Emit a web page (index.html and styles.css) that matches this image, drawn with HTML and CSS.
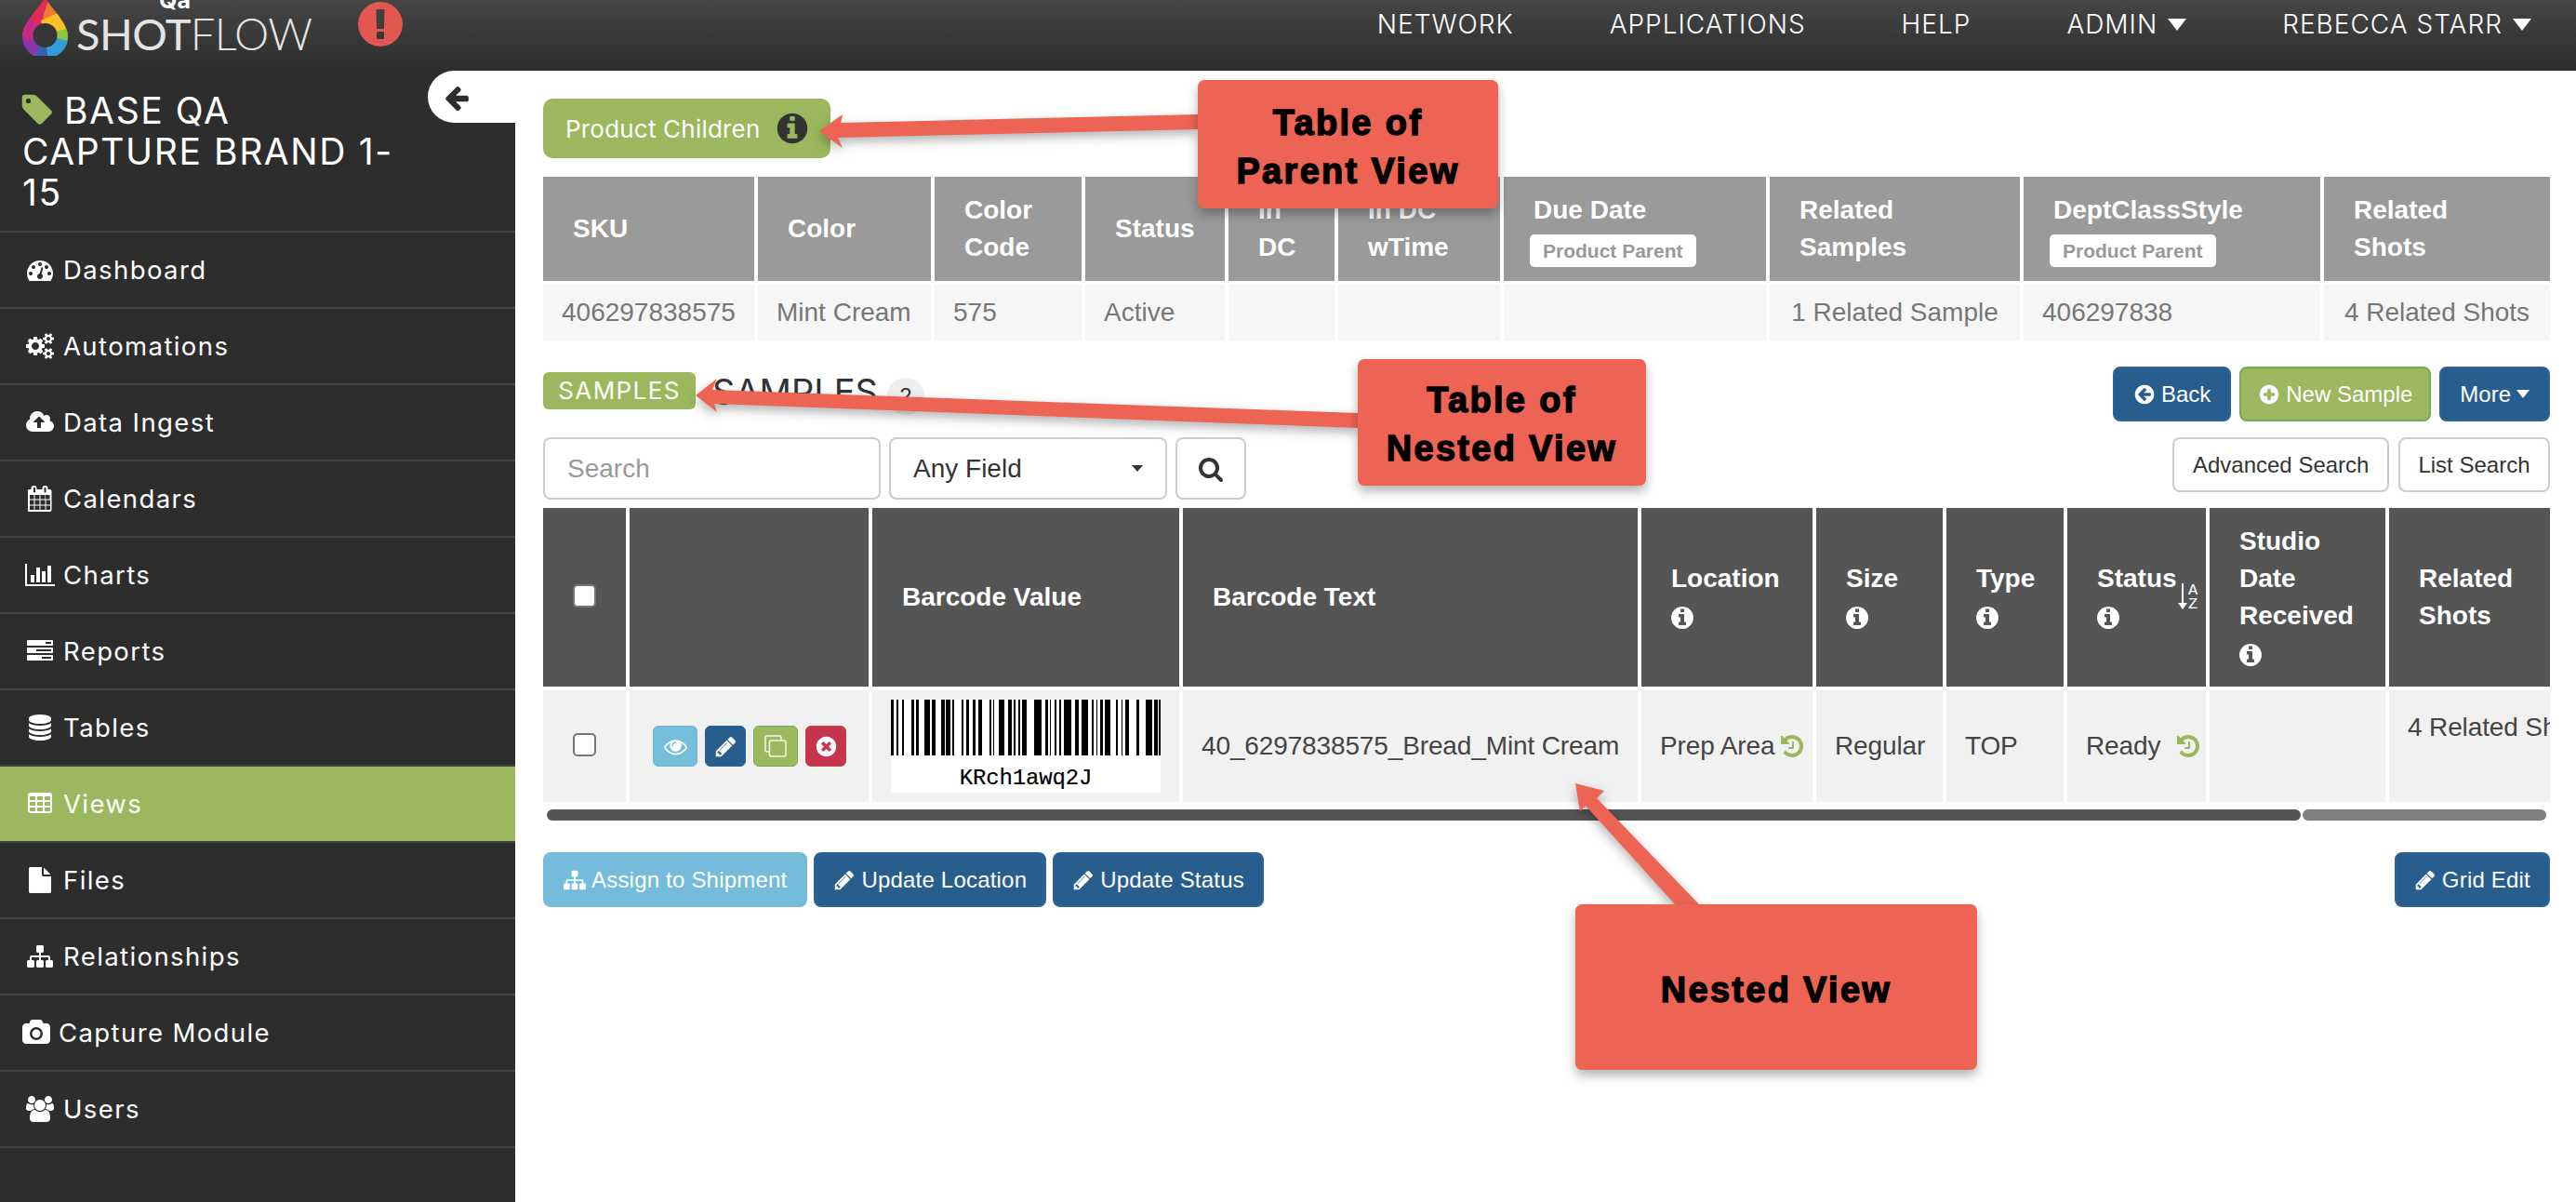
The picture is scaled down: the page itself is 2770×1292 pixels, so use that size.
FILE: index.html
```html
<!DOCTYPE html>
<html lang="en">
<head>
<meta charset="utf-8">
<title>ShotFlow</title>
<link rel="stylesheet" href="styles.css">
</head>
<body>
<svg class="sprite" xmlns="http://www.w3.org/2000/svg">
  <symbol id="i-arrow-left" viewBox="0 0 1792 1792"><path d="M1664 896v128q0 53-32.5 90.5t-84.5 37.5h-704l293 294q38 36 38 90t-38 90l-75 76q-37 37-90 37-52 0-91-37l-651-652q-37-37-37-90 0-52 37-91l651-650q38-38 91-38 52 0 90 38l75 74q38 38 38 91t-38 91l-293 293h704q52 0 84.5 37.5t32.5 90.5z"/></symbol>
  <symbol id="i-info" viewBox="0 0 1792 1792"><path d="M1152 1376v-160q0-14-9-23t-23-9h-96v-512q0-14-9-23t-23-9h-320q-14 0-23 9t-9 23v160q0 14 9 23t23 9h96v320h-96q-14 0-23 9t-9 23v160q0 14 9 23t23 9h448q14 0 23-9t9-23zm-128-896v-160q0-14-9-23t-23-9h-192q-14 0-23 9t-9 23v160q0 14 9 23t23 9h192q14 0 23-9t9-23zm640 416q0 209-103 385.500t-279.500 279.500-385.500 103-385.500-103-279.500-279.500-103-385.500 103-385.500 279.500-279.500 385.500-103 385.500 103 279.500 279.500 103 385.500z"/></symbol>
  <symbol id="i-search" viewBox="0 0 1792 1792"><path d="M1216 832q0-185-131.500-316.500t-316.500-131.500-316.500 131.500-131.500 316.500 131.500 316.500 316.500 131.500 316.500-131.500 131.500-316.500zm512 832q0 52-38 90t-90 38q-54 0-90-38l-343-342q-179 124-399 124-143 0-273.500-55.500t-225-150-150-225-55.500-273.500 55.500-273.500 150-225 225-150 273.500-55.500 273.500 55.500 225 150 150 225 55.500 273.500q0 220-124 399l343 343q37 37 37 90z"/></symbol>
  <symbol id="i-pencil" viewBox="0 0 1792 1792"><path d="M491 1536l91-91-235-235-91 91v107h128v128h107zm523-928q0-22-22-22-10 0-17 7l-542 542q-7 7-7 17 0 22 22 22 10 0 17-7l542-542q7-7 7-17zm-54-192l416 416-832 832h-416v-416zm683 96q0 53-37 90l-166 166-416-416 166-165q36-38 90-38 53 0 91 38l235 234q37 39 37 91z"/></symbol>
  <symbol id="i-tag" viewBox="0 0 1792 1792"><path d="M576 448q0-53-37.500-90.500t-90.500-37.500-90.500 37.500-37.500 90.500 37.500 90.500 90.500 37.500 90.500-37.500 37.500-90.500zm1067 576q0 53-37 90l-491 492q-39 37-91 37-53 0-90-37l-715-716q-38-37-64.500-101t-26.500-117v-416q0-52 38-90t90-38h416q53 0 117 26.500t102 64.500l715 714q37 39 37 91z"/></symbol>
  <symbol id="i-alert" viewBox="0 0 1792 1792"><path d="M896 128q209 0 385.500 103t279.500 279.500 103 385.500-103 385.500-279.500 279.500-385.500 103-385.500-103-279.500-279.500-103-385.500 103-385.500 279.500-279.500 385.500-103zm128 1247v-190q0-14-9-23.500t-22-9.500h-192q-13 0-23 10t-10 23v190q0 13 10 23t23 10h192q13 0 22-9.500t9-23.500zm-2-344l18-621q0-12-10-18-10-8-24-8h-220q-14 0-24 8-10 6-10 18l17 621q0 10 10 17.500t24 7.500h185q14 0 23.500-7.500t10.500-17.500z"/></symbol>
  <symbol id="i-times" viewBox="0 0 1792 1792"><path d="M1277 1122q0-26-19-45l-181-181 181-181q19-19 19-45 0-27-19-46l-90-90q-19-19-46-19-26 0-45 19l-181 181-181-181q-19-19-45-19-27 0-46 19l-90 90q-19 19-19 46 0 26 19 45l181 181-181 181q-19 19-19 45 0 27 19 46l90 90q19 19 46 19 26 0 45-19l181-181 181 181q19 19 45 19 27 0 46-19l90-90q19-19 19-46zm387-226q0 209-103 385.500t-279.500 279.500-385.500 103-385.500-103-279.500-279.500-103-385.500 103-385.500 279.500-279.500 385.500-103 385.500 103 279.500 279.500 103 385.500z"/></symbol>
  <symbol id="i-plus" viewBox="0 0 1792 1792"><path d="M1344 960v-128q0-26-19-45t-45-19h-256v-256q0-26-19-45t-45-19h-128q-26 0-45 19t-19 45v256h-256q-26 0-45 19t-19 45v128q0 26 19 45t45 19h256v256q0 26 19 45t45 19h128q26 0 45-19t19-45v-256h256q26 0 45-19t19-45zm320-64q0 209-103 385.500t-279.500 279.500-385.500 103-385.500-103-279.500-279.500-103-385.500 103-385.500 279.500-279.500 385.500-103 385.500 103 279.500 279.500 103 385.500z"/></symbol>
  <symbol id="i-back" viewBox="0 0 1792 1792"><path d="M1408 960v-128q0-26-18.500-45t-45.500-19h-502l189-189q19-19 19-45t-19-45l-91-91q-18-18-45-18t-45 18l-362 362-91 91q-18 18-18 45t18 45l91 91 362 362q18 18 45 18t45-18l91-91q18-18 18-45t-18-45l-189-189h502q27 0 45.500-19t18.500-45zm256-64q0 209-103 385.500t-279.500 279.500-385.500 103-385.500-103-279.500-279.500-103-385.500 103-385.500 279.500-279.500 385.500-103 385.500 103 279.500 279.500 103 385.500z"/></symbol>
  <symbol id="i-file" viewBox="0 0 1792 1792"><path d="M1152 512v-472q22 14 36 28l408 408q14 14 28 36h-472zm-128 32q0 40 28 68t68 28h544v1056q0 40-28 68t-68 28h-1344q-40 0-68-28t-28-68v-1600q0-40 28-68t68-28h800v544z"/></symbol>
  <symbol id="i-sitemap" viewBox="0 0 1792 1792"><path d="M1792 1248v320q0 40-28 68t-68 28h-320q-40 0-68-28t-28-68v-320q0-40 28-68t68-28h96v-192h-512v192h96q40 0 68 28t28 68v320q0 40-28 68t-68 28h-320q-40 0-68-28t-28-68v-320q0-40 28-68t68-28h96v-192h-512v192h96q40 0 68 28t28 68v320q0 40-28 68t-68 28h-320q-40 0-68-28t-28-68v-320q0-40 28-68t68-28h96v-192q0-52 38-90t90-38h512v-192h-96q-40 0-68-28t-28-68v-320q0-40 28-68t68-28h320q40 0 68 28t28 68v320q0 40-28 68t-68 28h-96v192h512q52 0 90 38t38 90v192h96q40 0 68 28t28 68z"/></symbol>
  <symbol id="i-camera" viewBox="0 0 1920 1792"><path d="M960 672q119 0 203.500 84.500t84.500 203.500-84.500 203.500-203.500 84.500-203.500-84.500-84.500-203.500 84.500-203.500 203.500-84.500zm704-416q106 0 181 75t75 181v896q0 106-75 181t-181 75h-1408q-106 0-181-75t-75-181v-896q0-106 75-181t181-75h224l51-136q19-49 69.500-84.500t103.500-35.500h512q53 0 103.500 35.500t69.500 84.500l51 136h224zm-704 1152q185 0 316.500-131.500t131.500-316.500-131.500-316.500-316.500-131.500-316.500 131.500-131.500 316.500 131.500 316.500 316.500 131.500z"/></symbol>
  <symbol id="i-users" viewBox="0 0 1920 1792"><path d="M593 896q-162 5-265 128h-134q-82 0-138-40.500t-56-118.500q0-353 124-353 6 0 43.500 21t97.500 42.500 119 21.500q67 0 133-23-5 37-5 66 0 139 81 256zm1071 637q0 120-73 189.500t-194 69.500h-874q-121 0-194-69.500t-73-189.500q0-53 3.500-103.500t14-109 26.500-108.500 43-97.500 62-81 85.500-53.500 111.500-20q10 0 43 21.500t73 48 107 48 135 21.500 135-21.500 107-48 73-48 43-21.500q61 0 111.500 20t85.500 53.500 62 81 43 97.500 26.500 108.500 14 109 3.500 103.500zm-1024-1277q0 106-75 181t-181 75-181-75-75-181 75-181 181-75 181 75 75 181zm704 384q0 159-112.500 271.500t-271.500 112.500-271.500-112.500-112.500-271.500 112.500-271.500 271.500-112.500 271.500 112.500 112.500 271.500zm576 225q0 78-56 118.500t-138 40.500h-134q-103-123-265-128 81-117 81-256 0-29-5-66 66 23 133 23 59 0 119-21.500t97.500-42.500 43.500-21q124 0 124 353zm-128-609q0 106-75 181t-181 75-181-75-75-181 75-181 181-75 181 75 75 181z"/></symbol>
  <symbol id="i-database" viewBox="0 0 1792 1792"><path d="M896 768q237 0 443-43t325-127v170q0 69-103 128t-280 93.500-385 34.500-385-34.500-280-93.500-103-128v-170q119 84 325 127t443 43zm0 768q237 0 443-43t325-127v170q0 69-103 128t-280 93.500-385 34.500-385-34.500-280-93.500-103-128v-170q119 84 325 127t443 43zm0-384q237 0 443-43t325-127v170q0 69-103 128t-280 93.500-385 34.500-385-34.500-280-93.500-103-128v-170q119 84 325 127t443 43zm0-1152q208 0 385 34.500t280 93.500 103 128v128q0 69-103 128t-280 93.500-385 34.500-385-34.500-280-93.500-103-128v-128q0-69 103-128t280-93.500 385-34.500z"/></symbol>
  <symbol id="i-table" viewBox="0 0 1792 1792"><path d="M576 1376v-192q0-14-9-23t-23-9h-320q-14 0-23 9t-9 23v192q0 14 9 23t23 9h320q14 0 23-9t9-23zm0-384v-192q0-14-9-23t-23-9h-320q-14 0-23 9t-9 23v192q0 14 9 23t23 9h320q14 0 23-9t9-23zm512 384v-192q0-14-9-23t-23-9h-320q-14 0-23 9t-9 23v192q0 14 9 23t23 9h320q14 0 23-9t9-23zm-512-768v-192q0-14-9-23t-23-9h-320q-14 0-23 9t-9 23v192q0 14 9 23t23 9h320q14 0 23-9t9-23zm512 384v-192q0-14-9-23t-23-9h-320q-14 0-23 9t-9 23v192q0 14 9 23t23 9h320q14 0 23-9t9-23zm512 384v-192q0-14-9-23t-23-9h-320q-14 0-23 9t-9 23v192q0 14 9 23t23 9h320q14 0 23-9t9-23zm-512-768v-192q0-14-9-23t-23-9h-320q-14 0-23 9t-9 23v192q0 14 9 23t23 9h320q14 0 23-9t9-23zm512 384v-192q0-14-9-23t-23-9h-320q-14 0-23 9t-9 23v192q0 14 9 23t23 9h320q14 0 23-9t9-23zm0-384v-192q0-14-9-23t-23-9h-320q-14 0-23 9t-9 23v192q0 14 9 23t23 9h320q14 0 23-9t9-23zm128-320v1088q0 66-47 113t-113 47h-1344q-66 0-113-47t-47-113v-1088q0-66 47-113t113-47h1344q66 0 113 47t47 113z"/></symbol>
  <symbol id="i-chart" viewBox="0 0 2048 1792"><path d="M640 896v512h-256v-512h256zm384-512v1024h-256v-1024h256zm1024 1152v128h-2048v-1536h128v1408h1920zm-640-896v768h-256v-768h256zm384-384v1152h-256v-1152h256z"/></symbol>
  <symbol id="i-cloud" viewBox="0 0 1920 1792"><path d="M1280 864q0-14-9-23l-352-352q-9-9-23-9t-23 9l-351 351q-10 12-10 24 0 14 9 23t23 9h224v352q0 13 9.500 22.500t22.500 9.500h192q13 0 22.500-9.500t9.500-22.500v-352h224q13 0 22.500-9.500t9.500-22.500zm640 288q0 159-112.500 271.500t-271.500 112.500h-1088q-185 0-316.500-131.500t-131.500-316.500q0-130 70-240t188-165q-2-30-2-43 0-212 150-362t362-150q156 0 285.500 87t188.500 231q71-62 166-62 106 0 181 75t75 181q0 76-41 138 130 31 213.500 135.500t83.500 238.500z"/></symbol>
  <symbol id="i-calendar" viewBox="0 0 1664 1792"><path d="M128 1664h288v-288h-288v288zm352 0h320v-288h-320v288zm-352-352h288v-320h-288v320zm352 0h320v-320h-320v320zm-352-384h288v-288h-288v288zm736 736h320v-288h-320v288zm-384-736h320v-288h-320v288zm768 736h288v-288h-288v288zm-384-352h320v-320h-320v320zm-352-864v-288q0-13-9.500-22.500t-22.500-9.500h-64q-13 0-22.500 9.500t-9.500 22.500v288q0 13 9.500 22.500t22.500 9.500h64q13 0 22.500-9.500t9.500-22.500zm736 864h288v-320h-288v320zm-384-384h320v-288h-320v288zm352 0h288v-288h-288v288zm32-480v-288q0-13-9.500-22.500t-22.500-9.500h-64q-13 0-22.500 9.500t-9.500 22.500v288q0 13 9.500 22.500t22.500 9.500h64q13 0 22.500-9.500t9.500-22.500zm384-64v1280q0 52-38 90t-90 38h-1408q-52 0-90-38t-38-90v-1280q0-52 38-90t90-38h128v-96q0-66 47-113t113-47h64q66 0 113 47t47 113v96h384v-96q0-66 47-113t113-47h64q66 0 113 47t47 113v96h128q52 0 90 38t38 90z"/></symbol>
  <symbol id="i-tasks" viewBox="0 0 1792 1792"><path d="M1024 1408h640v-128h-640v128zm-384-512h1024v-128h-1024v128zm640-512h384v-128h-384v128zm512 832v256q0 26-19 45t-45 19h-1664q-26 0-45-19t-19-45v-256q0-26 19-45t45-19h1664q26 0 45 19t19 45zm0-512v256q0 26-19 45t-45 19h-1664q-26 0-45-19t-19-45v-256q0-26 19-45t45-19h1664q26 0 45 19t19 45zm0-512v256q0 26-19 45t-45 19h-1664q-26 0-45-19t-19-45v-256q0-26 19-45t45-19h1664q26 0 45 19t19 45z"/></symbol>
  <symbol id="i-dashboard" viewBox="0 0 1792 1792"><path d="M384 1152q0-53-37.500-90.500t-90.500-37.500-90.500 37.500-37.500 90.500 37.500 90.500 90.500 37.500 90.500-37.500 37.500-90.500zm192-448q0-53-37.500-90.500t-90.500-37.500-90.500 37.500-37.500 90.500 37.500 90.500 90.500 37.500 90.500-37.500 37.500-90.500zm428 481l101-382q6-26-7.500-48.500t-38.500-29.500-48 6.500-30 39.500l-101 382q-60 5-107 43.500t-63 98.500q-20 77 20 146t117 89 146-20 89-117q16-60-6-117t-72-91zm660-33q0-53-37.500-90.500t-90.500-37.500-90.500 37.500-37.500 90.500 37.500 90.500 90.500 37.500 90.500-37.500 37.500-90.500zm-640-640q0-53-37.500-90.500t-90.500-37.500-90.500 37.500-37.500 90.500 37.500 90.500 90.500 37.500 90.500-37.500 37.500-90.500zm448 192q0-53-37.500-90.500t-90.500-37.500-90.500 37.500-37.500 90.500 37.500 90.500 90.500 37.500 90.500-37.500 37.500-90.500zm320 448q0 261-141 483-19 29-54 29h-1402q-35 0-54-29-141-221-141-483 0-182 71-348t191-286 286-191 348-71 348 71 286 191 191 286 71 348z"/></symbol>
  <symbol id="i-cogs" viewBox="0 0 1920 1792"><path d="M896 896q0-106-75-181t-181-75-181 75-75 181 75 181 181 75 181-75 75-181zm768 512q0-52-38-90t-90-38-90 38-38 90q0 53 37.500 90.500t90.500 37.500 90.500-37.500 37.500-90.500zm0-1024q0-52-38-90t-90-38-90 38-38 90q0 53 37.500 90.500t90.500 37.500 90.500-37.500 37.500-90.500zm-384 421v185q0 10-7 19.500t-16 10.500l-155 24q-11 35-32 76 34 48 90 115 7 11 7 20 0 12-7 19-23 30-82.500 89.500t-78.500 59.500q-11 0-21-7l-115-90q-37 19-77 31-11 108-23 155-7 24-30 24h-186q-11 0-20-7.500t-10-17.500l-23-153q-34-10-75-31l-118 89q-7 7-20 7-11 0-21-8-144-133-144-160 0-9 7-19 10-14 41-53t47-61q-23-44-35-82l-152-24q-10-1-17-9.500t-7-19.500v-185q0-10 7-19.500t16-10.500l155-24q11-35 32-76-34-48-90-115-7-11-7-20 0-12 7-20 22-30 82-89t79-59q11 0 21 7l115 90q34-18 77-32 11-108 23-154 7-24 30-24h186q11 0 20 7.500t10 17.500l23 153q34 10 75 31l118-89q8-7 20-7 11 0 21 8 144 133 144 160 0 8-7 19-12 16-42 54t-45 60q23 48 34 82l152 23q10 2 17 10.500t7 19.500zm640 533v140q0 16-149 31-12 27-30 52 51 113 51 138 0 4-4 7-122 71-124 71-8 0-46-47t-52-68q-20 2-30 2t-30-2q-14 21-52 68t-46 47q-2 0-124-71-4-3-4-7 0-25 51-138-18-25-30-52-149-15-149-31v-140q0-16 149-31 13-29 30-52-51-113-51-138 0-4 4-7 4-2 35-20t59-34 30-16q8 0 46 46.500t52 67.500q20-2 30-2t30 2q51-71 92-112l6-2q4 0 124 70 4 3 4 7 0 25-51 138 17 23 30 52 149 15 149 31zm0-1024v140q0 16-149 31-12 27-30 52 51 113 51 138 0 4-4 7-122 71-124 71-8 0-46-47t-52-68q-20 2-30 2t-30-2q-14 21-52 68t-46 47q-2 0-124-71-4-3-4-7 0-25 51-138-18-25-30-52-149-15-149-31v-140q0-16 149-31 13-29 30-52-51-113-51-138 0-4 4-7 4-2 35-20t59-34 30-16q8 0 46 46.500t52 67.500q20-2 30-2t30 2q51-71 92-112l6-2q4 0 124 70 4 3 4 7 0 25-51 138 17 23 30 52 149 15 149 31z"/></symbol>
  <symbol id="i-history" viewBox="0 0 1792 1792"><path d="M1664 896q0 156-61 298t-164 245-245 164-298 61q-172 0-327-72.500t-264-204.500q-7-10-6.500-22.500t8.500-20.500l137-138q10-9 25-9 16 2 23 12 73 95 179 147t225 52q104 0 198.500-40.500t163.500-109.500 109.500-163.500 40.500-198.500-40.500-198.500-109.500-163.500-163.500-109.500-198.500-40.500q-98 0-188 35.500t-160 101.500l137 138q31 30 14 69-17 40-59 40h-448q-26 0-45-19t-19-45v-448q0-42 40-59 39-17 69 14l130 129q107-101 244.500-156.500t284.500-55.500q156 0 298 61t245 164 164 245 61 298zm-640-288v448q0 14-9 23t-23 9h-320q-14 0-23-9t-9-23v-64q0-14 9-23t23-9h224v-352q0-14 9-23t23-9h64q14 0 23 9t9 23z"/></symbol>
  <symbol id="i-eye" viewBox="0 0 1792 1792"><path d="M1664 960q-152-236-381-353 61 104 61 225 0 185-131.500 316.500t-316.500 131.500-316.500-131.500-131.500-316.500q0-121 61-225-229 117-381 353 133 205 333.500 326.500t434.500 121.500 434.500-121.500 333.500-326.500zm-720-384q0-20-14-34t-34-14q-125 0-214.500 89.500t-89.500 214.500q0 20 14 34t34 14 34-14 14-34q0-86 61-147t147-61q20 0 34-14t14-34zm848 384q0 34-20 69-140 230-376.500 368.500t-499.500 138.500-499.500-139-376.500-368q-20-35-20-69t20-69q140-229 376.500-368t499.500-139 499.500 139 376.500 368q20 35 20 69z"/></symbol>
</svg>

<header class="topbar">
  <div class="brand">
    <svg class="logo" viewBox="0 0 49 60" xmlns="http://www.w3.org/2000/svg">
      <defs><clipPath id="drop"><path d="M24.500 -3C30 8 49 24 49 39C49 53 38 63 24.500 63C11 63 0 53 0 39C0 24 19 8 24.500 -3Z"/></clipPath></defs>
      <g clip-path="url(#drop)">
        <path fill="#e12a5c" d="M24.500 38L-6 10L20 -6L30 -6L22 18Z"/>
        <path fill="#ee7a31" d="M24.500 38L22 18L30 -6L44 16Z"/>
        <path fill="#f6c325" d="M24.500 38L20 22L38 14L55 30L55 36Z"/>
        <path fill="#8fc640" d="M24.500 38L55 28L55 58L44 60Z"/>
        <path fill="#2f9fd8" d="M24.500 38L50 44L44 70L16 70Z"/>
        <path fill="#3b62b2" d="M24.500 38L28 66L4 66L8 48Z"/>
        <path fill="#8a35a9" d="M24.500 38L12 62L-6 60L-6 24L10 30Z"/>
        <path fill="#c42a86" d="M24.500 38L4 44L-6 30L4 16L14 26Z"/>
        <circle cx="24.500" cy="38" r="13" fill="#363636"/>
      </g>
    </svg>
    <span class="wordmark"><span class="wordmark-strong">SHOT</span>FLOW</span>
    <span class="env">Qa</span>
    <svg class="alert"><use href="#i-alert"/></svg>
  </div>
  <nav class="topnav">
    <a>NETWORK</a>
    <a>APPLICATIONS</a>
    <a>HELP</a>
    <a>ADMIN<i class="caret"></i></a>
    <a>REBECCA STARR<i class="caret"></i></a>
  </nav>
</header>

<div class="shell">
  <aside class="sidebar">
    <div class="collapse"><svg class="collapse-icon"><use href="#i-arrow-left"/></svg></div>
    <h1 class="title"><svg class="title-tag"><use href="#i-tag"/></svg>BASE QA<br>CAPTURE BRAND 1-<br>15</h1>
    <ul class="menu">
      <li class="menu-item"><span class="menu-icon"><svg class="w28"><use href="#i-dashboard"/></svg></span>Dashboard</li>
      <li class="menu-item"><span class="menu-icon"><svg class="w30"><use href="#i-cogs"/></svg></span>Automations</li>
      <li class="menu-item"><span class="menu-icon"><svg class="w30"><use href="#i-cloud"/></svg></span>Data Ingest</li>
      <li class="menu-item"><span class="menu-icon"><svg class="w26"><use href="#i-calendar"/></svg></span>Calendars</li>
      <li class="menu-item"><span class="menu-icon"><svg class="w32"><use href="#i-chart"/></svg></span>Charts</li>
      <li class="menu-item"><span class="menu-icon"><svg class="w28"><use href="#i-tasks"/></svg></span>Reports</li>
      <li class="menu-item"><span class="menu-icon"><svg class="w28"><use href="#i-database"/></svg></span>Tables</li>
      <li class="menu-item menu-item-active"><span class="menu-icon"><svg class="w28"><use href="#i-table"/></svg></span>Views</li>
      <li class="menu-item"><span class="menu-icon"><svg class="w28"><use href="#i-file"/></svg></span>Files</li>
      <li class="menu-item"><span class="menu-icon"><svg class="w28"><use href="#i-sitemap"/></svg></span>Relationships</li>
      <li class="menu-item"><span class="menu-icon menu-icon-camera"><svg class="w30"><use href="#i-camera"/></svg></span>Capture Module</li>
      <li class="menu-item"><span class="menu-icon"><svg class="w30"><use href="#i-users"/></svg></span>Users</li>
    </ul>
  </aside>

  <main class="content">
    <div class="pill-btn">Product Children<svg class="pill-info"><use href="#i-info"/></svg></div>

    <div class="grid parent-grid">
      <div class="th th-light">SKU</div>
      <div class="th th-light">Color</div>
      <div class="th th-light">Color<br>Code</div>
      <div class="th th-light">Status</div>
      <div class="th th-light">In<br>DC</div>
      <div class="th th-light">In DC<br>wTime</div>
      <div class="th th-light"><div>Due Date<br><span class="label">Product Parent</span></div></div>
      <div class="th th-light">Related<br>Samples</div>
      <div class="th th-light"><div>DeptClassStyle<br><span class="label">Product Parent</span></div></div>
      <div class="th th-light">Related<br>Shots</div>
      <div class="td td-light">406297838575</div>
      <div class="td td-light">Mint Cream</div>
      <div class="td td-light">575</div>
      <div class="td td-light">Active</div>
      <div class="td td-light"></div>
      <div class="td td-light"></div>
      <div class="td td-light"></div>
      <div class="td td-light td-centered">1 Related Sample</div>
      <div class="td td-light">406297838</div>
      <div class="td td-light td-centered">4 Related Shots</div>
    </div>

    <div class="section-bar">
      <div class="section-title">
        <span class="tag-green">SAMPLES</span>
        <h2 class="heading">SAMPLES</h2>
        <span class="count">2</span>
      </div>
      <div class="btn-row">
        <a class="btn btn-blue"><svg class="btn-icon"><use href="#i-back"/></svg>Back</a>
        <a class="btn btn-green"><svg class="btn-icon"><use href="#i-plus"/></svg>New Sample</a>
        <a class="btn btn-blue">More<i class="caret caret-small"></i></a>
      </div>
    </div>

    <div class="search-bar">
      <div class="search-left">
        <input class="field field-search" placeholder="Search" aria-label="Search">
        <div class="field field-select">Any Field<i class="caret caret-dark"></i></div>
        <div class="field field-go"><svg class="go-icon"><use href="#i-search"/></svg></div>
      </div>
      <div class="search-right">
        <a class="btn btn-plain">Advanced Search</a>
        <a class="btn btn-plain">List Search</a>
      </div>
    </div>

    <div class="grid child-grid">
      <div class="th th-dark th-center"><input class="check" type="checkbox" aria-label="Select all"></div>
      <div class="th th-dark"></div>
      <div class="th th-dark">Barcode Value</div>
      <div class="th th-dark">Barcode Text</div>
      <div class="th th-dark"><div>Location<br><svg class="th-info"><use href="#i-info"/></svg></div></div>
      <div class="th th-dark"><div>Size<br><svg class="th-info"><use href="#i-info"/></svg></div></div>
      <div class="th th-dark"><div>Type<br><svg class="th-info"><use href="#i-info"/></svg></div></div>
      <div class="th th-dark th-sorted"><div>Status<br><svg class="th-info"><use href="#i-info"/></svg></div>
        <span class="sort"><svg class="sort-arrow" viewBox="0 0 10 28"><path d="M4 0h2v21h4l-5 7-5-7h4z"/></svg><span class="sort-letters">A<br>Z</span></span>
      </div>
      <div class="th th-dark"><div>Studio<br>Date<br>Received<br><svg class="th-info"><use href="#i-info"/></svg></div></div>
      <div class="th th-dark">Related<br>Shots</div>

      <div class="td td-grey td-check"><input class="check" type="checkbox" aria-label="Select row"></div>
      <div class="td td-grey td-actions">
        <a class="act act-info"><svg class="act-icon"><use href="#i-eye"/></svg></a>
        <a class="act act-blue"><svg class="act-icon"><use href="#i-pencil"/></svg></a>
        <a class="act act-green"><svg class="act-copy" viewBox="0 0 24 24"><rect x="1" y="1" width="17" height="17" rx="2"/><rect class="act-copy-front" x="5.500" y="6" width="17.500" height="17" rx="2"/></svg></a>
        <a class="act act-red"><svg class="act-icon"><use href="#i-times"/></svg></a>
      </div>
      <div class="td td-grey td-barcode">
        <div class="barcode">
          <svg class="bars" viewBox="753 0 758 60" preserveAspectRatio="none"><path d="M753 0h9v60h-9zM768 0h5v60h-5zM784 0h5v60h-5zM810 0h8v60h-8zM824 0h8v60h-8zM847 0h15v60h-15zM868 0h10v60h-10zM895 0h9v60h-9zM908 0h12v60h-12zM925 0h5v60h-5zM952 0h6v60h-6zM965 0h7v60h-7zM983 0h7v60h-7zM998 0h12v60h-12zM1030 0h4v60h-4zM1040 0h4v60h-4zM1056 0h16v60h-16zM1082 0h10v60h-10zM1097 0h6v60h-6zM1110 0h7v60h-7zM1122 0h12v60h-12zM1155 0h21v60h-21zM1188 0h6v60h-6zM1200 0h3v60h-3zM1214 0h4v60h-4zM1226 0h6v60h-6zM1240 0h20v60h-20zM1270 0h10v60h-10zM1288 0h18v60h-18zM1318 0h4v60h-4zM1330 0h4v60h-4zM1340 0h10v60h-10zM1355 0h15v60h-15zM1386 0h6v60h-6zM1400 0h4v60h-4zM1412 0h10v60h-10zM1443 0h9v60h-9zM1470 0h17v60h-17zM1494 0h9v60h-9zM1507 0h4v60h-4z"/></svg>
          <div class="barcode-text">KRch1awq2J</div>
        </div>
      </div>
      <div class="td td-grey">40_6297838575_Bread_Mint Cream</div>
      <div class="td td-grey td-tight">Prep Area<svg class="hist"><use href="#i-history"/></svg></div>
      <div class="td td-grey">Regular</div>
      <div class="td td-grey">TOP</div>
      <div class="td td-grey td-ready">Ready<svg class="hist"><use href="#i-history"/></svg></div>
      <div class="td td-grey"></div>
      <div class="td td-grey td-clip">4 Related Shots</div>
    </div>

    <div class="scrollbar"><div class="scroll-thumb"></div><div class="scroll-rest"></div></div>

    <div class="bottom-bar">
      <div class="bottom-left">
        <a class="btn btn-info"><svg class="btn-icon"><use href="#i-sitemap"/></svg>Assign to Shipment</a>
        <a class="btn btn-blue"><svg class="btn-icon"><use href="#i-pencil"/></svg>Update Location</a>
        <a class="btn btn-blue"><svg class="btn-icon"><use href="#i-pencil"/></svg>Update Status</a>
      </div>
      <a class="btn btn-blue"><svg class="btn-icon"><use href="#i-pencil"/></svg>Grid Edit</a>
    </div>
  </main>
</div>

<svg class="arrows" viewBox="0 0 2770 1292" xmlns="http://www.w3.org/2000/svg">
  <polygon points="1288,123 904,132 906,123 881,141 906,159 901,148 1288,139"/>
  <polygon points="1460,444 766,419 771,407 748,425 771,443 768,434 1460,460"/>
  <polygon points="1801,972 1705,866 1699,872 1694,842 1725,850 1717,858 1827,972"/>
</svg>
<div class="callout callout-parent">Table of<br>Parent View</div>
<div class="callout callout-nested">Table of<br>Nested View</div>
<div class="callout callout-view">Nested View</div>
</body>
</html>
```

FILE: styles.css
```css
* { box-sizing: border-box; }
html, body { margin: 0; padding: 0; }
body {
  width: 2770px;
  height: 1292px;
  overflow: hidden;
  position: relative;
  background: #fff;
  font-family: "Liberation Sans", Arial, sans-serif;
  color: #333;
}
svg { fill: currentColor; display: block; }
.sprite { position: absolute; width: 0; height: 0; }

/* top bar */
.topbar {
  height: 76px;
  display: flex;
  justify-content: space-between;
  align-items: flex-start;
  background: linear-gradient(#454545, #2d2d2d);
  overflow: hidden;
  color: #fff;
}
.brand { position: relative; display: flex; align-items: flex-start; padding-left: 24px; }
.logo { width: 49px; height: 60px; flex: none; }
.wordmark {
  margin: 10px 0 0 9px;
  font-family: Lato, "Liberation Sans", sans-serif;
  font-weight: 300;
  font-size: 47px;
  line-height: 52px;
  color: #e4e4e4;
  letter-spacing: -0.6px;
}
.wordmark-strong { font-weight: 400; }
.env {
  position: absolute;
  left: 171px;
  top: -15px;
  font-family: Inter, sans-serif;
  font-weight: 700;
  font-size: 25px;
  line-height: 30px;
}
.alert { width: 56px; height: 56px; margin: -2px 0 0 45px; color: #e2574f; }
.topnav {
  display: flex;
  gap: 103px;
  padding-right: 48px;
  font-family: Inter, sans-serif;
  font-size: 28px;
  font-weight: 300;
  letter-spacing: 1px;
  line-height: 52px;
}
.topnav a { display: flex; align-items: center; }
.caret {
  display: inline-block;
  width: 0;
  height: 0;
  margin-left: 11px;
  border-left: 10px solid transparent;
  border-right: 10px solid transparent;
  border-top: 13px solid #fff;
}
.caret-small { margin-left: 6px; border-left-width: 7px; border-right-width: 7px; border-top-width: 9px; }
.caret-dark { margin-left: auto; border-left-width: 6px; border-right-width: 6px; border-top-width: 7px; border-top-color: #333; }

/* sidebar */
.shell { display: flex; height: 1216px; }
.sidebar {
  position: relative;
  width: 554px;
  flex: none;
  background: #2d2d2d;
  color: #fff;
  font-family: Inter, sans-serif;
}
.collapse {
  position: absolute;
  left: 460px;
  top: 0;
  right: 0;
  height: 56px;
  padding: 14px 0 0 16px;
  background: #fff;
  border-radius: 28px 0 0 28px;
  color: #2d2d2d;
}
.collapse-icon { width: 30px; height: 30px; }
.title {
  margin: 0;
  height: 172px;
  padding: 21px 24px 0;
  font-size: 39px;
  line-height: 44px;
  font-weight: 400;
  letter-spacing: 1.6px;
}
.title-tag { display: inline-block; width: 38px; height: 38px; margin: 0 10px -4px -3px; color: #9bb85e; }
.menu { margin: 0; padding: 0; list-style: none; border-top: 2px solid #444; }
.menu-item {
  height: 82px;
  display: flex;
  align-items: center;
  padding-left: 26px;
  border-bottom: 2px solid #444;
  font-size: 27.5px;
  letter-spacing: 1.4px;
}
.menu-item-active { background: #9bb85e; }
.menu-icon { width: 34px; margin-right: 8px; display: flex; justify-content: center; flex: none; }
.menu-icon-camera { margin: 0 9px 0 -2px; width: 30px; }
.w26 { width: 26px; height: 28px; }
.w28 { width: 28px; height: 28px; }
.w30 { width: 30px; height: 28px; }
.w32 { width: 32px; height: 28px; }

/* content */
.content { flex: 1; min-width: 0; padding: 30px 28px 0 30px; }
.pill-btn {
  width: 309px;
  height: 64px;
  display: flex;
  align-items: center;
  padding-left: 24px;
  background: #9bb85e;
  border-radius: 10px;
  color: #fff;
  font-family: Inter, sans-serif;
  font-size: 26px;
  letter-spacing: 0.2px;
}
.pill-info { width: 38px; height: 38px; margin-left: 16px; color: #333; flex: none; }

.grid { display: grid; column-gap: 4px; row-gap: 4px; }
.parent-grid {
  margin-top: 20px;
  grid-template-columns: 227px 186px 158px 150px 114px 174px 282px 269px 319px 243px;
  grid-template-rows: 112px 60px;
}
.child-grid {
  margin-top: 9px;
  grid-template-columns: 89px 257px 330px 489px 184px 136px 126px 149px 189px 173px;
  grid-template-rows: 192px 120px;
}
.th {
  display: flex;
  align-items: center;
  padding-left: 32px;
  color: #fff;
  font-size: 28px;
  font-weight: 700;
  line-height: 40px;
}
.th-light { background: #9a9a9a; }
.th-dark { background: #555; }
.th-center { padding: 0 0 3px 32px; align-items: center; }
.th-sorted { position: relative; padding-left: 32px; }
.label {
  display: inline-block;
  height: 35px;
  padding: 0 14px;
  margin: 6px 0 0 -4px;
  background: #fff;
  border-radius: 5px;
  color: #999;
  font-size: 21px;
  line-height: 35px;
  vertical-align: top;
}
.th-info { display: inline-block; width: 28px; height: 28px; margin-left: -2px; vertical-align: -7px; }
.sort { position: absolute; left: 119px; top: 81px; display: flex; gap: 1px; }
.sort-arrow { width: 10px; height: 28px; }
.sort-letters { font-family: "Liberation Mono", monospace; font-size: 17px; line-height: 15px; font-weight: 400; }

.td { display: flex; align-items: center; padding-left: 20px; font-size: 28px; white-space: nowrap; }
.td-light { background: #f6f6f6; color: #777; }
.td-grey { background: #f1f1f1; color: #444; letter-spacing: -0.13px; }
.td-centered { justify-content: center; padding-left: 0; }
.td-check { padding: 0 0 4px 32px; }
.td-actions { padding: 0 0 0 25px; gap: 8px; }
.td-tight { padding-right: 0; }
.td-ready { padding-left: 20px; }
.td-clip { align-items: flex-start; padding-top: 20px; overflow: hidden; line-height: 40px; }
.td-barcode { padding-left: 20px; }
.check {
  appearance: none;
  width: 25px;
  height: 25px;
  margin: 0;
  background: #fff;
  border: 2px solid #777;
  border-radius: 5px;
}
.act {
  height: 44px;
  display: flex;
  align-items: center;
  justify-content: center;
  border-radius: 6px;
  color: #fff;
  border: 1px solid transparent;
}
.act-info { width: 48px; background: #75bedb; border-color: #6bb6d4; }
.act-blue { width: 44px; background: #285e8e; border-color: #2d6395; }
.act-green { width: 48px; background: #9bb85e; border-color: #6eae5a; }
.act-red { width: 44px; background: #c7344f; border-color: #c34a3e; }
.act-icon { width: 25px; height: 25px; }
.act-copy { width: 24px; height: 24px; fill: none; stroke: #f2f6e6; stroke-width: 1.5; }
.act-copy-front { fill: #9bb85e; }
.barcode { width: 290px; height: 100px; background: #fff; color: #000; }
.bars { width: 290px; height: 60px; shape-rendering: crispEdges; }
.barcode-text {
  text-align: center;
  font-family: "Liberation Mono", "Courier New", monospace;
  font-size: 24px;
  line-height: 50px;
  -webkit-text-stroke: 0.2px #000;
}
.hist { width: 28px; height: 28px; margin-left: 5px; color: #9bb85e; flex: none; }
.td-ready .hist { margin-left: 16px; }

.scrollbar { display: flex; gap: 2px; height: 12px; margin: 8px 4px 0; }
.scroll-thumb { width: 1886px; background: #555; border-radius: 6px; }
.scroll-rest { flex: 1; background: #808080; border-radius: 6px; }

.section-bar { display: flex; justify-content: space-between; align-items: flex-start; margin-top: 28px; height: 59px; }
.section-title { display: flex; align-items: flex-start; padding-top: 6px; }
.tag-green {
  width: 164px;
  height: 40px;
  background: #9bb85e;
  border-radius: 6px;
  color: #fff;
  font-family: Inter, sans-serif;
  font-size: 26px;
  letter-spacing: 1.4px;
  line-height: 40px;
  text-align: center;
}
.heading {
  margin: -1px 0 0 18px;
  font-family: Inter, sans-serif;
  font-weight: 400;
  font-size: 38px;
  line-height: 44px;
  color: #333;
}
.count {
  width: 40px;
  height: 40px;
  margin: 6px 0 0 10px;
  border-radius: 50%;
  background: #eee;
  text-align: center;
  font-size: 24px;
  line-height: 40px;
}
.btn-row { display: flex; gap: 9px; }
.search-bar { display: flex; justify-content: space-between; align-items: flex-start; margin-top: 17px; }
.search-left { display: flex; gap: 9px; }
.search-right { display: flex; gap: 10px; }
.field {
  height: 67px;
  display: flex;
  align-items: center;
  background: #fff;
  border: 2px solid #ccc;
  border-radius: 8px;
  font: inherit;
  font-size: 28px;
  color: #333;
}
.field-search { width: 363px; padding: 0 24px; outline: none; }
.field-search::placeholder { color: #999; }
.field-select { width: 299px; padding: 0 24px; }
.field-go { width: 76px; justify-content: center; }
.go-icon { width: 28px; height: 28px; }

.btn {
  height: 59px;
  display: inline-flex;
  align-items: center;
  padding: 0 20px;
  border: 2px solid transparent;
  border-radius: 8px;
  font-size: 24px;
  white-space: nowrap;
}
.btn-blue { background: #285e8e; border-color: #2d6395; color: #fff; }
.btn-green { background: #9bb85e; border-color: #6eae5a; color: #fff; padding: 0 18px; }
.btn-info { background: #74bcd9; border-color: #74bcd9; color: #fff; }
.btn-plain { background: #fff; border-color: #ccc; color: #333; padding: 0 19.5px; }
.btn-icon { width: 24px; height: 24px; margin-right: 6px; flex: none; }

.bottom-bar { display: flex; justify-content: space-between; margin-top: 34px; }
.bottom-bar .btn { padding: 0 19px; letter-spacing: 0.2px; }
.bottom-bar .btn-info { padding: 0 20px 0 20px; }
.bottom-left { display: flex; gap: 7px; }

/* annotations */
.arrows {
  position: absolute;
  left: 0;
  top: 0;
  width: 2770px;
  height: 1292px;
  fill: #ee6454;
  filter: drop-shadow(0 5px 6px rgba(0,0,0,.3));
  pointer-events: none;
}
.callout {
  position: absolute;
  display: flex;
  align-items: center;
  justify-content: center;
  padding-top: 5px;
  text-align: center;
  background: #ee6454;
  border-radius: 7px;
  box-shadow: 0 6px 12px rgba(0,0,0,.3);
  color: #000;
  font-size: 38px;
  line-height: 52px;
  font-weight: 700;
  letter-spacing: 2.3px;
  -webkit-text-stroke: 1.4px #000;
}
.callout-parent { left: 1288px; top: 86px; width: 323px; height: 138px; }
.callout-nested { left: 1460px; top: 386px; width: 310px; height: 136px; padding-top: 3px; }
.callout-view { left: 1694px; top: 972px; width: 432px; height: 178px; }
```
